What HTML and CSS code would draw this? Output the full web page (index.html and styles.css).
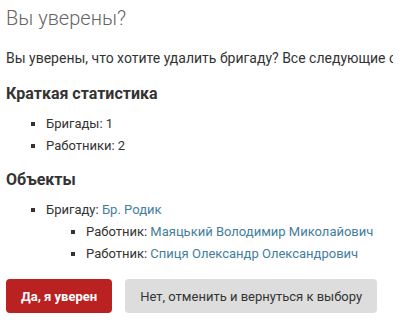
FILE: index.html
```html
<!DOCTYPE html>
<html lang="ru">

<head>
    <meta charset="UTF-8">
    <meta name="viewport" content="width=device-width, initial-scale=1.0">
    <title>Вы уверены?</title>
    <link rel="stylesheet" href="styles.css">
</head>

<body>

    <div id="content">
        <h1>Вы уверены?</h1>

        <p class="intro">Вы уверены, что хотите удалить бригаду? Все следующие объекты и связанные с ними элементы будут удалены:</p>

        <h2>Краткая статистика</h2>
        <ul>
            <li>Бригады: 1</li>
            <li>Работники: 2</li>
        </ul>

        <h2>Объекты</h2>
        <ul>
            <li>Бригаду: <a href="#">Бр. Родик</a>
                <ul>
                    <li>Работник: <a href="#">Маяцький Володимир Миколайович</a></li>
                    <li>Работник: <a href="#">Спиця Олександр Олександрович</a></li>
                </ul>
            </li>
        </ul>

        <form class="actions">
            <button type="button" class="btn btn-danger">Да, я уверен</button>
            <button type="button" class="btn btn-cancel">Нет, отменить и вернуться к выбору</button>
        </form>
    </div>

</body>

</html>
```

FILE: styles.css
```css
body {
    margin: 0;
    padding: 0 6px;
    font-family: Roboto, "Liberation Sans", sans-serif;
    font-size: 13px;
    color: #333;
    background: #fff;
}

#content {
    overflow: hidden;
}

h1 {
    font-size: 20px;
    font-weight: 300;
    color: #666;
    margin: 4px 0 0;
    line-height: 28px;
}

.intro {
    margin: 0;
    padding-top: 15px;
    font-size: 14px;
    line-height: 22px;
    white-space: nowrap;
}

h2 {
    font-size: 16px;
    font-weight: 700;
    margin: 14px 0 0;
    line-height: 22px;
}

ul {
    list-style-type: square;
    margin: 10px 0 0;
    padding-left: 40px;
}

li {
    line-height: 18px;
    margin-bottom: 4px;
}

li ul {
    margin-top: 4px;
}

a {
    color: #447e9b;
    text-decoration: none;
}

.actions {
    display: flex;
    gap: 13px;
    margin-top: 16px;
}

.btn {
    font-family: Roboto, "Liberation Sans", sans-serif;
    font-size: 13px;
    height: 34px;
    border: none;
    border-radius: 4px;
    padding: 0 15px;
}

.btn-danger {
    background: #ba2121;
    color: #fff;
    font-weight: 700;
}

.btn-cancel {
    background: #ddd;
    color: #333;
}
```
